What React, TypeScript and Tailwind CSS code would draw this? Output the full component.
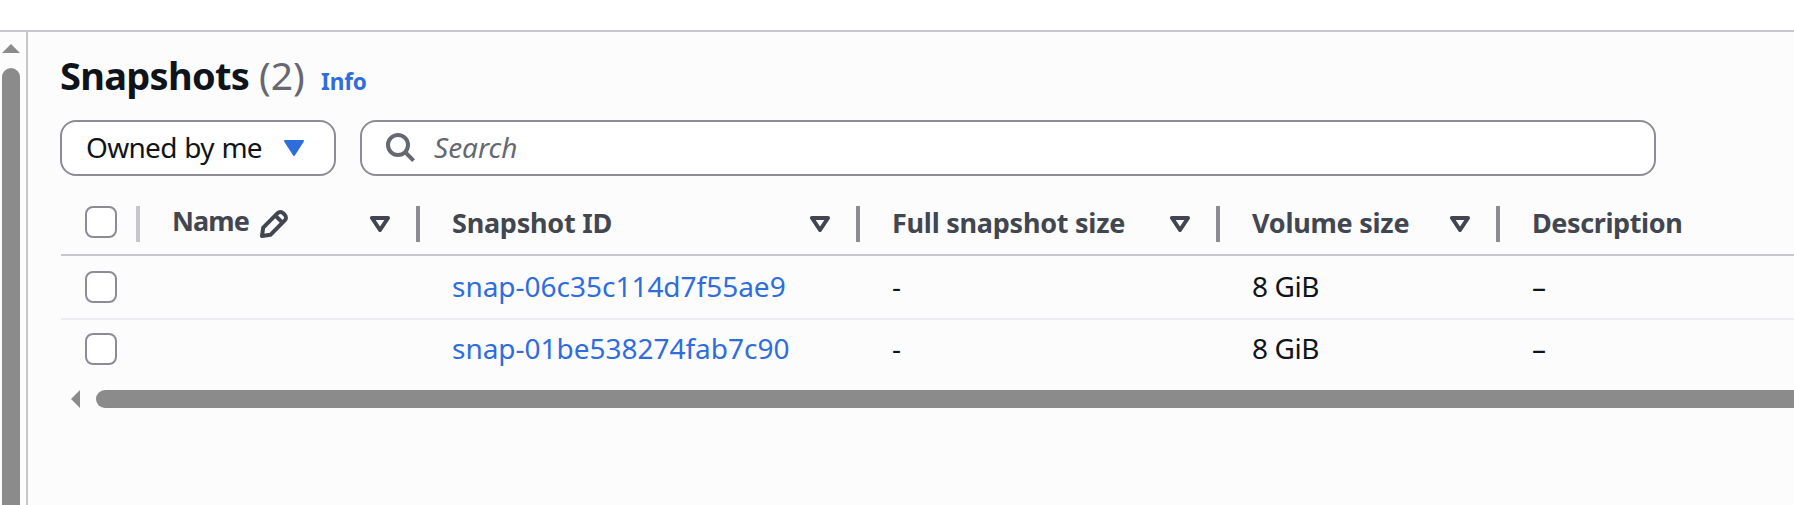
import type { ReactNode } from "react";

function Checkbox() {
  return <span className="block size-8 shrink-0 rounded-[8px] border-2 border-[#8c8c94] bg-white" />;
}

function SortIcon() {
  return (
    <svg width="20" height="16" viewBox="0 0 20 16" className="block shrink-0">
      <path d="M2 2h16l-8 12z" fill="none" stroke="#424650" strokeWidth="4" strokeLinejoin="round" />
    </svg>
  );
}

function PencilIcon() {
  return (
    <svg width="28" height="28" viewBox="0 0 28 28" className="block shrink-0" fill="none" stroke="#424650" strokeWidth="4" strokeLinejoin="round">
      <path d="M2 26l1.2-8.4L17.6 3.2a3.9 3.9 0 0 1 5.5 0l1.7 1.7a3.9 3.9 0 0 1 0 5.5L10.4 24.8z" />
      <path d="M15.4 5.6l7 7" />
    </svg>
  );
}

function HeaderCell({ width, title, icon }: { width: string; title: string; icon?: ReactNode }) {
  return (
    <div className={`flex h-9 shrink-0 items-center justify-between border-r-4 border-[#8c8c94] pr-[26px] pl-8 ${width}`}>
      <span className={`flex items-center whitespace-nowrap ${icon ? "-mt-[6px] gap-[11px] tracking-[-0.9px]" : "-mt-[2px]"}`}>
        {title}
        {icon && <span className="mt-[6px]">{icon}</span>}
      </span>
      <SortIcon />
    </div>
  );
}

const rows = [
  { id: "snap-06c35c114d7f55ae9", idClass: "tracking-[-0.02px]", rowClass: "h-16 border-b-2 border-[#ebebf0]" },
  { id: "snap-01be538274fab7c90", idClass: "tracking-[-0.02px]", rowClass: "h-[60px] pb-[2px]" },
];

export default function App() {
  return (
    <div className="flex h-[505px] w-[1794px] flex-col overflow-hidden bg-white font-['Noto_Sans',sans-serif] text-[28px] leading-[40px] text-[#0f141a]">
      <header className="h-8 shrink-0 border-b-2 border-[#c6c6cd] bg-white" />
      <div className="flex min-h-0 flex-1 bg-[#fcfcfd]">
        <aside className="flex w-7 shrink-0 flex-col items-start border-r-2 border-[#c6c6cd] pt-3 pl-[2px]">
          <svg width="18" height="9" viewBox="0 0 18 9" className="block shrink-0">
            <path d="M9 0l9 9H0z" fill="#8b8b8b" />
          </svg>
          <div className="mt-[15px] w-[18px] flex-1 rounded-t-full bg-[#8b8b8b]" />
        </aside>
        <main className="flex min-w-0 flex-1 flex-col pl-8">
          <div className="flex h-[88px] shrink-0 items-baseline pt-[15px] leading-[56px] whitespace-nowrap">
            <h1 className="w-[199px] text-[38px] font-bold tracking-[-0.7px]">Snapshots</h1>
            <span className="w-[62px] text-[39px] text-[#656871]">(2)</span>
            <a className="text-[22.5px] font-bold tracking-[-0.1px] text-[#2f6ddd]">Info</a>
          </div>
          <div className="flex shrink-0 gap-6">
            <div className="flex h-14 w-[276px] shrink-0 items-center justify-between rounded-[16px] border-2 border-[#8c8c94] bg-white pr-[30px] pl-[24px]">
              <span className="-mt-[3px] tracking-[-0.7px] whitespace-nowrap [word-spacing:1px]">Owned by me</span>
              <svg width="20" height="16" viewBox="0 0 20 16" className="block shrink-0">
                <path d="M1 1h18l-9 14z" fill="#2f6ddd" stroke="#2f6ddd" strokeWidth="2" strokeLinejoin="round" />
              </svg>
            </div>
            <div className="flex h-14 w-[1296px] shrink-0 items-center rounded-[16px] border-2 border-[#8c8c94] bg-white pl-[24px]">
              <svg width="30" height="30" viewBox="0 0 30 30" className="block shrink-0" fill="none" stroke="#656871" strokeWidth="4">
                <circle cx="12" cy="12" r="10" />
                <path d="M19 19l8.6 8.6" />
              </svg>
              <span className="-mt-[2px] ml-[18px] text-[#656871] italic">Search</span>
            </div>
          </div>
          <div className="ml-px flex h-20 shrink-0 border-b-2 border-[#c6c6cd] pt-[30px] text-[27px] font-bold tracking-[-0.25px] text-[#424650]">
            <div className="flex h-9 w-[79px] shrink-0 items-start border-r-4 border-[#c6c6cd] pl-[24px]">
              <Checkbox />
            </div>
            <HeaderCell width="w-[280px]" title="Name" icon={<PencilIcon />} />
            <HeaderCell width="w-[440px]" title="Snapshot ID" />
            <HeaderCell width="w-[360px]" title="Full snapshot size" />
            <HeaderCell width="w-[280px]" title="Volume size" />
            <div className="-mt-px flex h-9 items-center pl-8 tracking-[-0.4px]">Description</div>
          </div>
          {rows.map((row) => (
            <div key={row.id} className={`ml-px flex shrink-0 items-center whitespace-nowrap ${row.rowClass}`}>
              <div className="w-[391px] shrink-0 pl-[24px]">
                <Checkbox />
              </div>
              <div className="-mt-[2px] flex">
                <a className={`w-[440px] shrink-0 text-[#2f6ddd] ${row.idClass}`}>{row.id}</a>
                <span className="w-[360px] shrink-0">-</span>
                <span className="w-[280px] shrink-0 tracking-[-0.4px]">8 GiB</span>
                <span>–</span>
              </div>
            </div>
          ))}
          <div className="mt-[10px] flex h-[18px] shrink-0 items-center pl-[11px]">
            <svg width="9" height="18" viewBox="0 0 9 18" className="block shrink-0">
              <path d="M0 9l9-9v18z" fill="#8b8b8b" />
            </svg>
            <div className="ml-4 h-[18px] flex-1 rounded-l-full bg-[#8b8b8b]" />
          </div>
        </main>
      </div>
    </div>
  );
}
